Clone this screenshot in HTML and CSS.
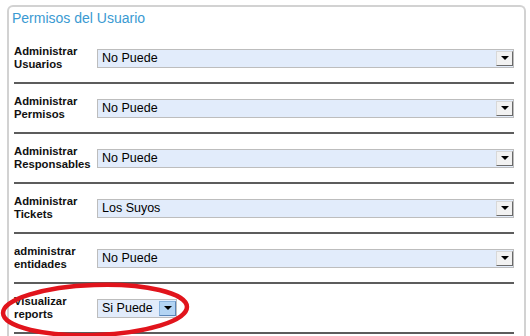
FILE: index.html
```html
<!DOCTYPE html>
<html lang="es">
<head>
    <meta charset="UTF-8">
    <title>Permisos del Usuario</title>
    <link rel="stylesheet" href="styles.css">
</head>
<body>

<div class="panel">
    <h2 class="title">Permisos del Usuario</h2>

    <div class="perm-row">
        <div class="perm-label">Administrar<br>Usuarios</div>
        <div class="select"><span class="value">No Puede</span><span class="arrow"></span></div>
    </div>
    <div class="perm-row">
        <div class="perm-label">Administrar<br>Permisos</div>
        <div class="select"><span class="value">No Puede</span><span class="arrow"></span></div>
    </div>
    <div class="perm-row">
        <div class="perm-label">Administrar<br>Responsables</div>
        <div class="select"><span class="value">No Puede</span><span class="arrow"></span></div>
    </div>
    <div class="perm-row">
        <div class="perm-label">Administrar<br>Tickets</div>
        <div class="select"><span class="value">Los Suyos</span><span class="arrow"></span></div>
    </div>
    <div class="perm-row">
        <div class="perm-label">administrar<br>entidades</div>
        <div class="select"><span class="value">No Puede</span><span class="arrow"></span></div>
    </div>
    <div class="perm-row">
        <div class="perm-label">Visualizar<br>reports</div>
        <div class="select short"><span class="value">Si Puede</span><span class="arrow hover"></span></div>
    </div>
</div>

<!-- red marker drawn over the last row -->
<svg class="marker" width="530" height="336" viewBox="0 0 530 336">
    <ellipse cx="95" cy="310" rx="92" ry="25" fill="none" stroke="#e1141c" stroke-width="4.5" transform="rotate(-2 95 310)"/>
</svg>

</body>
</html>
```

FILE: styles.css
```css
body {
    margin: 0;
    background: #ffffff;
    font-family: "Liberation Sans", Arial, sans-serif;
    position: relative;
    height: 336px;
    overflow: hidden;
}

.panel {
    margin: 5px 4px 0 7px;
    border: 2px solid #d2d2d2;
    border-bottom: none;
    border-radius: 6px 6px 0 0;
    padding: 0 10px 0 5px;
    height: 340px;
}

.title {
    margin: 3px 0 8px -2px;
    font-size: 14px;
    font-weight: normal;
    line-height: 16px;
    color: #3a9ad2;
}

.perm-row {
    display: flex;
    align-items: center;
    height: 48px;
    border-bottom: 2px solid #5c5c5c;
}

.perm-label {
    width: 83px;
    font-size: 11.3px;
    font-weight: bold;
    line-height: 13px;
    color: #111;
}

.select {
    flex: 1;
    height: 17px;
    display: flex;
    align-items: center;
    border: 1px solid #bdbdbd;
    background: #e2ecfb;
}

.select.short {
    flex: none;
    width: 78px;
}

.value {
    padding-left: 4px;
    font-size: 12.5px;
    color: #000;
}

.arrow {
    margin-left: auto;
    width: 15px;
    height: 13px;
    border: 1px solid;
    border-color: #d8d8d8 #6a6a6a #6a6a6a #d8d8d8;
    background: #f2f2f2;
    display: flex;
    align-items: center;
    justify-content: center;
}

.arrow::after {
    content: "";
    border-left: 4px solid transparent;
    border-right: 4px solid transparent;
    border-top: 4px solid #000;
}

.arrow.hover {
    background: #b3d4f3;
    border-color: #8ab4de #5a86b8 #5a86b8 #8ab4de;
}

.marker {
    position: absolute;
    left: 0;
    top: 0;
    pointer-events: none;
}
```
